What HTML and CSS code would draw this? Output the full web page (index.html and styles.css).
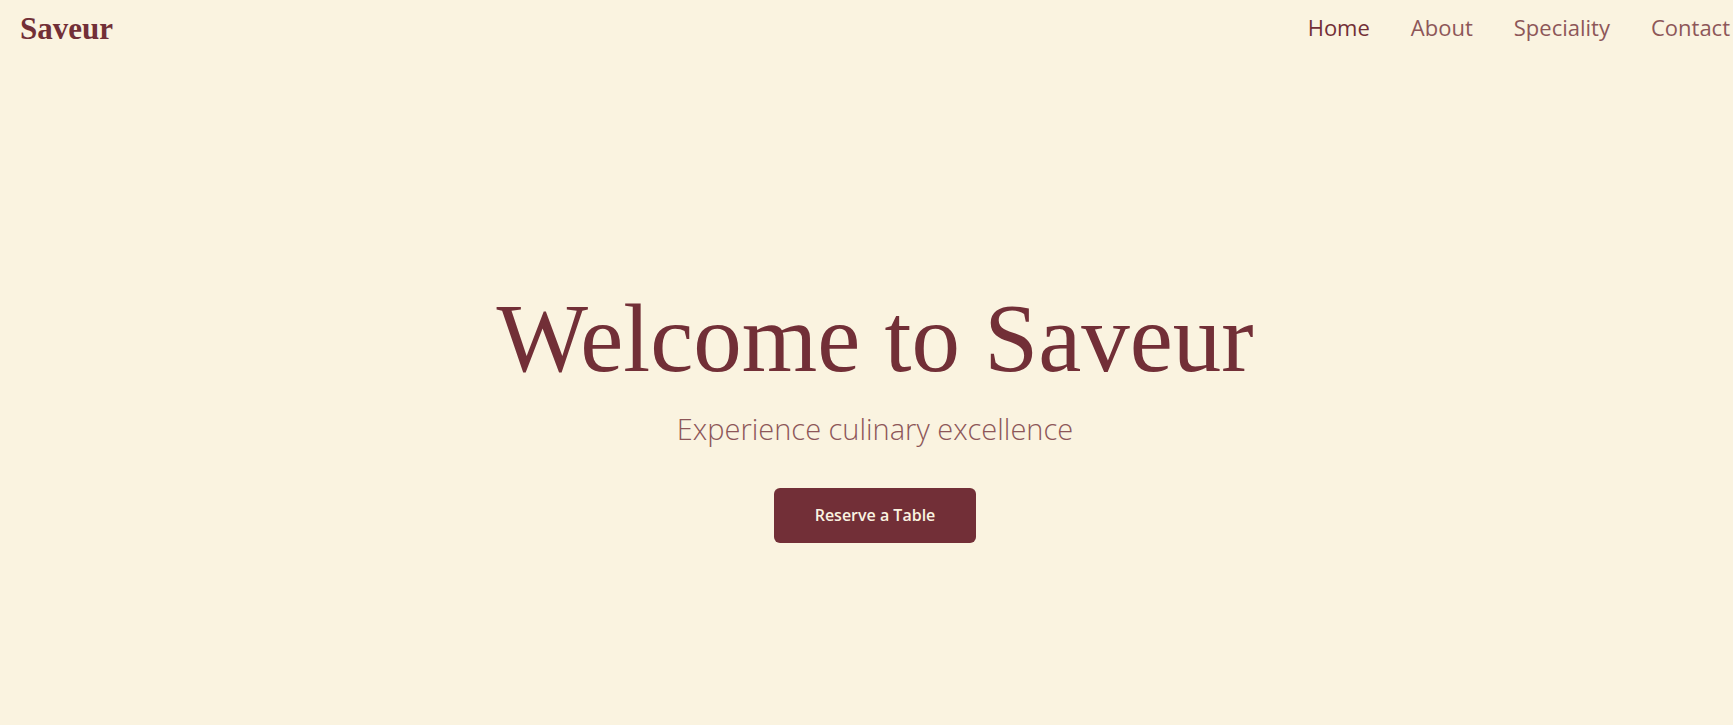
FILE: index.html
```html
<!DOCTYPE html>
<html lang="en">
<head>
<meta charset="utf-8">
<title>Saveur</title>
<link rel="stylesheet" href="styles.css">
</head>
<body>
<div class="page">
  <header class="site-header">
    <a class="logo" href="#">Saveur</a>
    <nav class="nav">
      <a class="nav-link active" href="#">Home</a>
      <a class="nav-link" href="#">About</a>
      <a class="nav-link" href="#">Speciality</a>
      <a class="nav-link" href="#">Contact</a>
    </nav>
  </header>
  <main class="hero">
    <h1 class="hero-title">Welcome to Saveur</h1>
    <p class="hero-subtitle">Experience culinary excellence</p>
    <a class="btn" href="#">Reserve a Table</a>
  </main>
</div>
</body>
</html>
```
FILE: styles.css
```css
* {
  box-sizing: border-box;
}

html, body {
  margin: 0;
  padding: 0;
  background: #faf3e0;
  overflow: hidden;
}

body {
  font-family: "Open Sans", "Noto Sans", sans-serif;
  color: #722f37;
  height: 725px;
}

.page {
  width: 1750px;
}

.site-header {
  display: flex;
  align-items: center;
  justify-content: space-between;
  height: 55px;
  padding: 0 20px;
}

.logo {
  font-family: "Liberation Serif", "Times New Roman", serif;
  font-weight: 700;
  font-size: 31px;
  line-height: 1;
  color: #722f37;
  text-decoration: none;
  margin-top: 2px;
}

.nav {
  display: flex;
  gap: 41px;
}

.nav-link {
  font-size: 22px;
  line-height: 1.2;
  color: #722f37;
  opacity: 0.8;
  text-decoration: none;
}

.nav-link.active {
  opacity: 1;
}

.hero {
  display: flex;
  flex-direction: column;
  align-items: center;
  padding-top: 235px;
  text-align: center;
}

.hero-title {
  margin: 0;
  font-family: "Liberation Serif", "Times New Roman", serif;
  font-weight: 400;
  font-size: 97px;
  line-height: 1;
  color: #722f37;
}

.hero-subtitle {
  margin: 25px 0 0;
  font-size: 29px;
  font-weight: 300;
  line-height: 1.2;
  color: #722f37;
  opacity: 0.8;
}

.btn {
  margin-top: 41px;
  display: inline-flex;
  align-items: center;
  justify-content: center;
  height: 55px;
  padding: 0 41px;
  background: #722f37;
  color: #faf3e0;
  border-radius: 6px;
  font-size: 16px;
  font-weight: 600;
  text-decoration: none;
}
```
